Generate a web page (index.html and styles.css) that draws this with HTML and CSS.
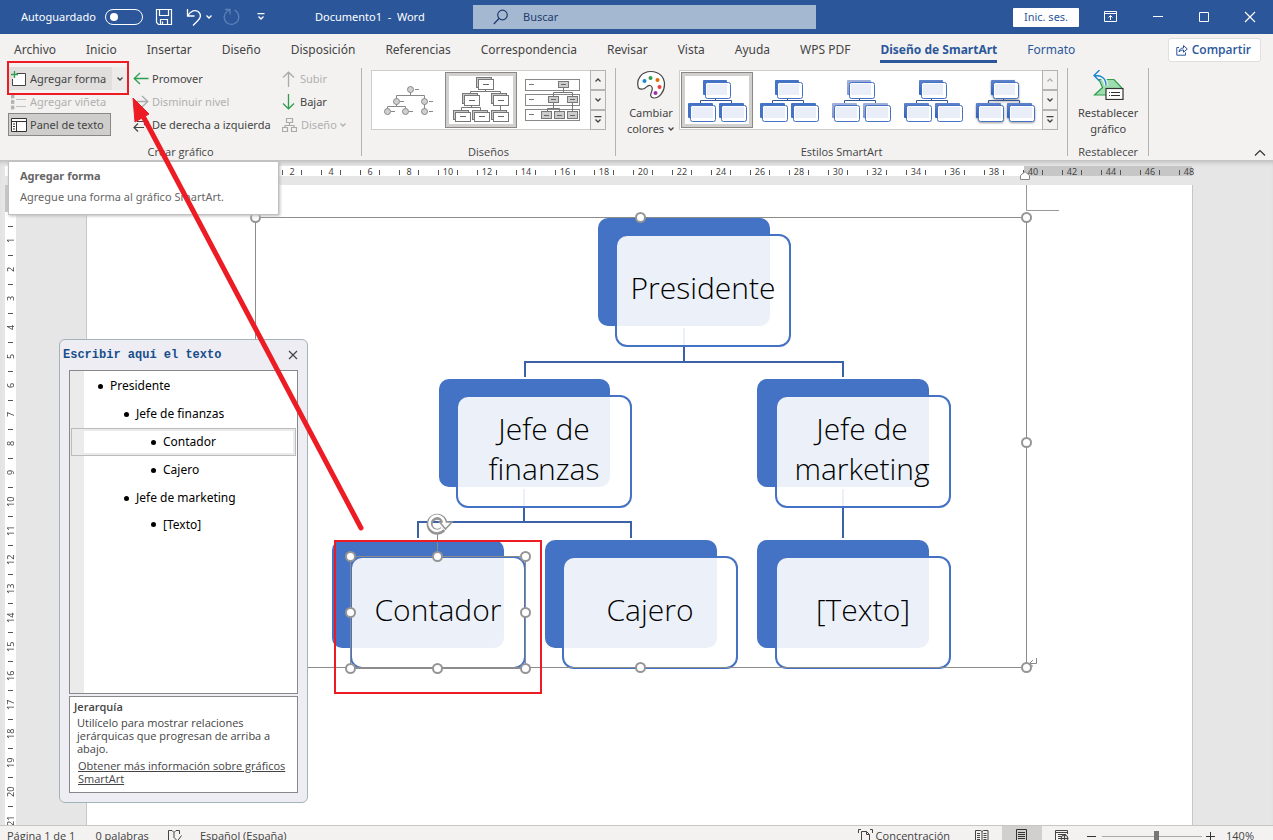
FILE: index.html
```html
<!DOCTYPE html>
<html lang="es">
<head>
<meta charset="utf-8">
<title>Documento1 - Word</title>
<link rel="stylesheet" href="styles.css">
</head>
<body>
<svg class="defs" aria-hidden="true">
  <defs>
    <linearGradient id="fade" x1="0" y1="0" x2="0" y2="1"><stop offset="0" stop-color="#9fb0da"/><stop offset="1" stop-color="#8296cc"/></linearGradient>
    <linearGradient id="deep" x1="0" y1="0" x2="0" y2="1"><stop offset="0" stop-color="#6083cb"/><stop offset="1" stop-color="#2e61ba"/></linearGradient>
    <symbol id="chev" viewBox="0 0 8 8"><path d="M1.500 2.500 4 5l2.500-2.500" fill="none" stroke="currentColor" stroke-width="1.300"/></symbol>
    <symbol id="chev-up" viewBox="0 0 8 8"><path d="M1.500 5.500 4 3l2.500 2.500" fill="none" stroke="currentColor" stroke-width="1.300"/></symbol>
    <symbol id="chev-more" viewBox="0 0 8 8"><path d="M0.500 0.500h7M1.500 3.500 4 6l2.500-2.500" fill="none" stroke="currentColor" stroke-width="1.300"/></symbol>
    <symbol id="style-thumb" viewBox="0 0 72 56">
      <g class="backs"><rect x="22" y="8" width="24" height="15" rx="1"/><rect x="7" y="31" width="25" height="15" rx="1"/><rect x="38" y="31" width="25" height="15" rx="1"/></g>
      <path d="M34.500 26v3M19.500 31v-2.500h31v2.500" fill="none" stroke="#2f5597"/>
      <g class="fronts"><rect x="24.500" y="10.500" width="25" height="16" rx="2"/><rect x="9.500" y="33.500" width="25" height="16" rx="2"/><rect x="40.500" y="33.500" width="25" height="16" rx="2"/></g>
      <g fill="#e9eef8"><rect x="26" y="12" width="20" height="11"/><rect x="11" y="35" width="21" height="11"/><rect x="42" y="35" width="21" height="11"/></g>
    </symbol>
  </defs>
</svg>

<header class="titlebar">
  <div class="title-left">
    <label class="autosave">Autoguardado <input type="checkbox" class="toggle"></label>
    <button class="tbtn save" aria-label="Guardar"><svg width="18" height="18" viewBox="0 0 18 18"><path d="M1.500 1.500h15v15h-13l-2-2zM4.500 1.500v6h9v-6M5.500 16.500v-5h7v5M7.500 16v-2.500" fill="none" stroke="#fff" stroke-width="1.200"/></svg></button>
    <button class="tbtn undo" aria-label="Deshacer"><svg width="18" height="18" viewBox="0 0 18 18"><path d="M2.500 1v7h7M2.500 8C6 2.500 10 1.500 13 3.500c4 3 2.500 7-.5 9.500L8 17.500" fill="none" stroke="#fff" stroke-width="1.300"/></svg><svg width="8" height="8"><use href="#chev"/></svg></button>
    <button class="tbtn redo" aria-label="Rehacer" disabled><svg width="18" height="18" viewBox="0 0 18 18"><path d="M2 1.500h5v5M6.500 2C0 5 0 12 4 15c4 2.500 9 1.500 11-2.500 1.500-4 .5-8-3.500-10.500" fill="none" stroke="#5e80b8" stroke-width="1.300"/></svg></button>
    <button class="tbtn custom" aria-label="Personalizar"><svg width="8" height="8"><use href="#chev-more"/></svg></button>
    <span class="doc-title">Documento1&nbsp; -&nbsp; Word</span>
  </div>
  <label class="search">
    <svg width="16" height="16" viewBox="0 0 16 16"><circle cx="9.500" cy="6" r="4.800" fill="none" stroke="#1f3c6d" stroke-width="1.200"/><path d="M6 9.500.8 15" stroke="#1f3c6d" stroke-width="1.300"/></svg>
    <input type="text" placeholder="Buscar" aria-label="Buscar">
  </label>
  <div class="title-right">
    <button class="signin">Inic. ses.</button>
    <button class="wbtn" aria-label="Opciones de cinta"><svg width="14" height="12" viewBox="0 0 14 12"><path d="M.5.5h12v10H.5zM.5 2.500h12M6.500 9V4.500M4.500 6.500l2-2 2 2" fill="none" stroke="#fff"/></svg></button>
    <button class="wbtn" aria-label="Minimizar"><svg width="12" height="12"><path d="M1 5.500h10" stroke="#fff"/></svg></button>
    <button class="wbtn" aria-label="Maximizar"><svg width="12" height="12"><path d="M1.500 1.500h9v9h-9z" fill="none" stroke="#fff"/></svg></button>
    <button class="wbtn" aria-label="Cerrar"><svg width="12" height="12"><path d="M1 1l10 10M11 1 1 11" stroke="#fff" stroke-width="1.200"/></svg></button>
  </div>
</header>

<nav class="tabs">
  <button>Archivo</button><button>Inicio</button><button>Insertar</button><button>Diseño</button><button>Disposición</button><button>Referencias</button><button>Correspondencia</button><button>Revisar</button><button>Vista</button><button>Ayuda</button><button>WPS PDF</button><button class="active">Diseño de SmartArt</button><button class="context">Formato</button>
  <button class="share"><svg width="12" height="12" viewBox="0 0 12 12"><path d="M3 3.500H.8v7.700h8.700V8.500M3 8c.5-3 2-4 4.500-4V1.500L11.300 5 7.500 8.200V6C5.500 6 4.200 6.500 3 8z" fill="none" stroke="#2b579a"/></svg>Compartir</button>
</nav>

<section class="ribbon">
  <div class="group create">
    <div class="cols">
      <div class="col c1">
        <div class="split"><button class="cmd"><svg width="16" height="16" viewBox="0 0 16 16"><path d="M5.500 2.500h9v12h-13V8" fill="#fff" stroke="#444"/><path d="M3.500 0v7M0 3.500h7" stroke="#2f9e4f" stroke-width="1.300"/></svg>Agregar forma</button><button class="drop" aria-label="Más formas"><svg width="8" height="8"><use href="#chev"/></svg></button></div>
        <button class="cmd" disabled><svg width="16" height="16" viewBox="0 0 16 16"><path d="M0 1h3v3H0zM0 6.500h3v3H0zM0 12h3v3H0zM5 5.500h10M5 12.500h10" fill="#b5b3b1" stroke="#b5b3b1" stroke-width=".8"/></svg>Agregar viñeta</button>
        <button class="cmd pressed"><svg width="16" height="14" viewBox="0 0 16 14"><path d="M.5.500h15v13H.5z" fill="#fff" stroke="#333"/><path d="M.5 3.500h15M5.500 3.500v10M2 6h2M2 8.500h2M2 11h2" fill="none" stroke="#333"/></svg>Panel de texto</button>
      </div>
      <div class="col c2">
        <button class="cmd"><svg width="16" height="14" viewBox="0 0 16 14"><path d="M1 6.500h14.500M7 1 1.200 6.500 7 12" fill="none" stroke="#2f9e4f" stroke-width="1.300"/></svg>Promover</button>
        <button class="cmd" disabled><svg width="16" height="14" viewBox="0 0 16 14"><path d="M.5 6.500H15M9 1l5.800 5.500L9 12" fill="none" stroke="#aaa" stroke-width="1.300"/></svg>Disminuir nivel</button>
        <button class="cmd"><svg width="16" height="14" viewBox="0 0 16 14"><path d="M1 9.500h10M5 5.500 1 9.500l4 4M4 3.500h11M11 0l4 3.500L11 7" fill="none" stroke="#444" stroke-width="1.200"/></svg>De derecha a izquierda</button>
      </div>
      <div class="col c3">
        <button class="cmd" disabled><svg width="14" height="16" viewBox="0 0 14 16"><path d="M6.500 16V1.200M1 6.500l5.500-5.300L12 6.500" fill="none" stroke="#aaa" stroke-width="1.300"/></svg>Subir</button>
        <button class="cmd"><svg width="14" height="16" viewBox="0 0 14 16"><path d="M6.500 0v14.800M1 9.500l5.500 5.300L12 9.500" fill="none" stroke="#2f9e4f" stroke-width="1.300"/></svg>Bajar</button>
        <button class="cmd" disabled><svg width="15" height="16" viewBox="0 0 15 16"><path d="M4.500 1.500h6v4h-6zM.5 10.500h5v4h-5zM9.500 10.500h5v4h-5zM7.500 5.500v3M3 10.500v-2h9v2" fill="none" stroke="#aaa" stroke-width="1.200"/></svg>Diseño <svg class="mini" width="8" height="8"><use href="#chev"/></svg></button>
      </div>
    </div>
    <h2>Crear gráfico</h2>
  </div>

  <div class="group">
    <div class="gallery">
      <button class="thumb" aria-label="Jerarquía con círculos"><svg width="72" height="56" viewBox="0 0 72 56"><path d="M37.500 20v4M23.500 27v-3.500h28V38M23.500 31v4M14.500 38v-3.500h18V38M42 17.500h4M27 29.500h4M56 29.500h4M18 39.500h4M36 39.500h4M56 39.500h4" fill="none" stroke="#888"/><g fill="#d0d0d0" stroke="#888"><circle cx="37.500" cy="17.500" r="3"/><circle cx="23.500" cy="29.500" r="3"/><circle cx="51.500" cy="29.500" r="3"/><circle cx="14.500" cy="39.500" r="3"/><circle cx="32.500" cy="39.500" r="3"/><circle cx="51.500" cy="39.500" r="3"/></g></svg></button>
      <button class="thumb selected" aria-label="Jerarquía"><svg width="72" height="56" viewBox="0 0 72 56"><g fill="#c8c8c8" stroke="#777"><rect x="31.500" y="5.500" width="15" height="10"/><rect x="17.500" y="21.500" width="15" height="10"/><rect x="46.500" y="21.500" width="15" height="10"/><rect x="8.500" y="38.500" width="15" height="9"/><rect x="27.500" y="38.500" width="15" height="9"/><rect x="46.500" y="38.500" width="15" height="9"/></g><path d="M40.500 17v3M25.500 22v-2.500h30V22M26.500 34v2M16.500 38v-2.500h19V38M55.500 34v4" fill="none" stroke="#777"/><g fill="#fff" stroke="#777"><rect x="33.500" y="7.500" width="15" height="10"/><rect x="19.500" y="23.500" width="15" height="10"/><rect x="48.500" y="23.500" width="15" height="10"/><rect x="10.500" y="40.500" width="15" height="9"/><rect x="29.500" y="40.500" width="15" height="9"/><rect x="48.500" y="40.500" width="15" height="9"/></g><path d="M38 12.500h6M24 28.500h6M53 28.500h6M15 44.500h6M34 44.500h6M53 44.500h6" stroke="#666"/></svg></button>
      <button class="thumb" aria-label="Jerarquía etiquetada"><svg width="72" height="56" viewBox="0 0 72 56"><g fill="#fff" stroke="#888"><rect x="8.500" y="7.500" width="54" height="11"/><rect x="8.500" y="22.500" width="54" height="11"/><rect x="8.500" y="37.500" width="54" height="11"/></g><path d="M12 12.500h5M12 27.500h5M12 42.500h5M46.500 16v5M36.500 24v-3.500h19V40M36.500 31v6M30.500 40v-3.500h12V40" fill="none" stroke="#777"/><g fill="#ccc" stroke="#777"><rect x="41.500" y="9.500" width="10" height="6"/><rect x="31.500" y="24.500" width="10" height="6"/><rect x="50.500" y="24.500" width="10" height="6"/><rect x="24.500" y="39.500" width="10" height="7"/><rect x="37.500" y="39.500" width="10" height="7"/><rect x="50.500" y="39.500" width="10" height="7"/></g><path d="M44 12.500h5M34 27.500h5M53 27.500h5M27 43.500h5M40 43.500h5M53 43.500h5" stroke="#666"/></svg></button>
      <div class="scroll"><button aria-label="Anterior"><svg width="8" height="8"><use href="#chev-up"/></svg></button><button aria-label="Siguiente"><svg width="8" height="8"><use href="#chev"/></svg></button><button aria-label="Más"><svg width="8" height="8"><use href="#chev-more"/></svg></button></div>
    </div>
    <h2>Diseños</h2>
  </div>

  <div class="group">
    <div class="cols">
      <button class="big colors"><svg width="30" height="30" viewBox="0 0 30 30"><path d="M2.500 18C-.5 9 6 1.500 15 1.500c8 0 13.500 5.500 13.500 13 0 7-5 13.500-10.500 13.500-3.500 0-4-3-2.500-6 1-2.500 1.500-6-1.500-6.500-3-.5-4 3-7 3.500-2 .3-3.500 0-4.500-1z" fill="#fff" stroke="#444" stroke-width="1.200"/><circle cx="8.500" cy="11" r="2" fill="#1a86d0"/><circle cx="14.500" cy="8" r="2" fill="#2f9e4f"/><circle cx="21.500" cy="10" r="2" fill="#e06c00"/><circle cx="23.500" cy="17" r="2" fill="#ee3b3b"/><circle cx="19.500" cy="23" r="2" fill="#9b2fae"/></svg><span>Cambiar</span><span>colores <svg class="mini" width="8" height="8"><use href="#chev"/></svg></span></button>
      <div class="gallery">
        <button class="thumb selected" aria-label="Relleno blanco"><svg class="t-flat" width="72" height="56"><use href="#style-thumb"/></svg></button>
        <button class="thumb" aria-label="Contorno"><svg class="t-flat" width="72" height="56"><use href="#style-thumb"/></svg></button>
        <button class="thumb" aria-label="Efecto sutil"><svg class="t-fade" width="72" height="56"><use href="#style-thumb"/></svg></button>
        <button class="thumb" aria-label="Efecto moderado"><svg class="t-deep" width="72" height="56"><use href="#style-thumb"/></svg></button>
        <button class="thumb" aria-label="Efecto intenso"><svg class="t-deep t-shadow" width="72" height="56"><use href="#style-thumb"/></svg></button>
        <div class="scroll"><button aria-label="Anterior" disabled><svg width="8" height="8"><use href="#chev-up"/></svg></button><button aria-label="Siguiente"><svg width="8" height="8"><use href="#chev"/></svg></button><button aria-label="Más"><svg width="8" height="8"><use href="#chev-more"/></svg></button></div>
      </div>
    </div>
    <h2>Estilos SmartArt</h2>
  </div>

  <div class="group">
    <button class="big reset"><svg width="32" height="30" viewBox="0 0 32 30"><path d="M7 9.500h15l7.500 8v7.500H2.500l8-7.500z" fill="#9fdcae" stroke="#2f9e4f" stroke-width="1.200"/><path d="M2 5.500c8 0 12 3 12 10" fill="none" stroke="#f2f1f0" stroke-width="4"/><path d="M7.500 0 2 5.500 7.500 11M2 5.500c8-.5 12 3 12 10" fill="none" stroke="#1a86d0" stroke-width="1.400"/><rect x="14" y="18.500" width="17" height="11" fill="#fff" stroke="#333" stroke-width="1.200"/><path d="M17 22.500h1M19 22.500h9M17 25.500h1M19 25.500h9" stroke="#333"/></svg><span>Restablecer</span><span>gráfico</span></button>
    <h2>Restablecer</h2>
  </div>
  <button class="collapse" aria-label="Contraer la cinta"><svg width="12" height="8"><path d="M1 6.500 6 1.500l5 5" fill="none" stroke="#333" stroke-width="1.200"/></svg></button>
</section>

<main class="workspace">
  <ol class="hruler"><li>2</li><li>4</li><li>6</li><li>8</li><li>10</li><li>12</li><li>14</li><li>16</li><li>18</li><li>20</li><li>22</li><li>24</li><li>26</li><li>28</li><li>30</li><li>32</li><li>34</li><li>36</li><li>38</li><li>40</li><li>42</li><li>44</li><li>46</li><li>48</li></ol>
  <svg class="indent" width="10" height="9" viewBox="0 0 10 9"><path d="M.5 8.500v-4L5 .7l4.500 3.800v4z" fill="#fff" stroke="#888"/></svg>
  <div class="body">
    <ol class="vruler"><li>1</li><li>2</li><li>3</li><li>4</li><li>5</li><li>6</li><li>7</li><li>8</li><li>9</li><li>10</li><li>11</li><li>12</li><li>13</li><li>14</li><li>15</li><li>16</li><li>17</li><li>18</li><li>19</li><li>20</li><li>21</li></ol>
    <article class="page">
      <svg class="diagram" width="830" height="515" viewBox="240 185 830 515">
        <path d="M1026.500 185v25.500h32.500" fill="none" stroke="#999"/>
        <g fill="none" stroke="#3b62a8" stroke-width="2">
          <path d="M684 328v34M525 377v-15h318v15M524 489v33M418 538v-16h213v16M843 489v49"/>
        </g>
        <g fill="#4472c4">
          <rect x="598" y="218" width="172" height="108" rx="10"/><rect x="439" y="379" width="171" height="108" rx="10"/><rect x="757" y="379" width="172" height="108" rx="10"/><rect x="332" y="540" width="172" height="108" rx="10"/><rect x="545" y="540" width="172" height="108" rx="10"/><rect x="757" y="540" width="172" height="108" rx="10"/>
        </g>
        <g fill="#fff" fill-opacity=".9" stroke="#4472c4" stroke-width="2">
          <rect x="616" y="235" width="174" height="111" rx="11"/><rect x="457" y="396" width="174" height="111" rx="11"/><rect x="776" y="396" width="174" height="111" rx="11"/><rect x="351" y="557" width="174" height="111" rx="11"/><rect x="563" y="557" width="174" height="111" rx="11"/><rect x="776" y="557" width="174" height="111" rx="11"/>
        </g>
        <g class="node-text" text-anchor="middle">
          <text x="703" y="299">Presidente</text>
          <text x="544" y="440">Jefe de</text><text x="544" y="480">finanzas</text>
          <text x="862" y="440">Jefe de</text><text x="862" y="480">marketing</text>
          <text x="438" y="621">Contador</text><text x="650" y="621">Cajero</text><text x="863" y="621">[Texto]</text>
        </g>
        <path d="M255.500 217.500h771v450h-771zM350.500 556.500h175v112h-175zM437.500 533v23" fill="none" stroke="#8c8c8c"/>
        <path d="M1036.500 658v5.500h-7M1033 660l-3.500 3.500 3.500 3" fill="none" stroke="#888"/>
        <g fill="#fff" stroke="#959595" stroke-width="2">
          <circle cx="255.500" cy="217.500" r="4.500"/><circle cx="640.500" cy="217.500" r="4.500"/><circle cx="1026.500" cy="217.500" r="4.500"/><circle cx="1026.500" cy="442.500" r="4.500"/><circle cx="1026.500" cy="667.500" r="4.500"/><circle cx="640.500" cy="667.500" r="4.500"/>
          <circle cx="350.500" cy="556.500" r="4.500"/><circle cx="437.500" cy="556.500" r="4.500"/><circle cx="525.500" cy="556.500" r="4.500"/><circle cx="350.500" cy="612.500" r="4.500"/><circle cx="525.500" cy="612.500" r="4.500"/><circle cx="350.500" cy="668.500" r="4.500"/><circle cx="437.500" cy="668.500" r="4.500"/><circle cx="525.500" cy="668.500" r="4.500"/>
        </g>
        <path d="M443 529a7.500 7.500 0 1 1 1.500-6" fill="none" stroke="#959595" stroke-width="6"/>
        <path d="M439.500 522h12.500l-6.500 7z" fill="#fff" stroke="#959595" stroke-width="1.500"/>
        <path d="M442.500 528.500a7.500 7.500 0 1 1 2-5.500" fill="none" stroke="#fff" stroke-width="2.500"/>
      </svg>
    </article>
  </div>

  <aside class="textpane">
    <header><h3>Escribir aquí el texto</h3><button aria-label="Cerrar panel"><svg width="10" height="10"><path d="M1 1l8 8M9 1 1 9" stroke="#444" stroke-width="1.200"/></svg></button></header>
    <ul class="outline">
      <li class="l1">Presidente</li><li class="l2">Jefe de finanzas</li><li class="l3 current">Contador</li><li class="l3">Cajero</li><li class="l2">Jefe de marketing</li><li class="l3 last">[Texto]</li>
    </ul>
    <div class="info"><h4>Jerarquía</h4><p>Utilícelo para mostrar relaciones jerárquicas que progresan de arriba a abajo.</p><a href="#">Obtener más información sobre gráficos SmartArt</a></div>
  </aside>
  <div class="tooltip" role="tooltip"><strong>Agregar forma</strong><span>Agregue una forma al gráfico SmartArt.</span></div>
</main>

<footer class="status">
  <span class="s-page">Página 1 de 1</span><span class="s-words">0 palabras</span>
  <svg class="s-proof" width="15" height="14" viewBox="0 0 15 14"><path d="M6 11.500H1.500v-10H5l2 2 2-2h3.500V5M7 3.500V9M7.500 9l3 3 4-5.500" fill="none" stroke="#444"/></svg>
  <span>Español (España)</span>
  <button class="focus"><svg width="15" height="14" viewBox="0 0 15 14"><path d="M.5 4V.5H3M14.500 4V.5H12M3.500 14V2.500h5l3 3V14M8.500 2.500v3h3" fill="none" stroke="#444"/></svg>Concentración</button>
  <button class="view" aria-label="Modo lectura"><svg width="14" height="14" viewBox="0 0 14 14"><path d="M.5 1.500h5l1.500 1 1.500-1h4.500v11H.5zM7 2.500V13M2 4.500h3M2 6.500h3M2 8.500h3M2 10.500h3M8.500 4.500h3M8.500 6.500h3M8.500 8.500h3M8.500 10.500h3" fill="none" stroke="#444"/></svg></button>
  <button class="view on" aria-label="Diseño de impresión"><svg width="14" height="14" viewBox="0 0 14 14"><path d="M1.500.5h10v13h-10zM3 3.500h7M3 5.500h7M3 7.500h7M3 9.500h7M3 11.500h7" fill="none" stroke="#333"/></svg></button>
  <button class="view" aria-label="Diseño web"><svg width="14" height="14" viewBox="0 0 14 14"><path d="M6 12.500H.5V1.500h12V5M.5 3.500h12M3 5.500h8M3 7.500h4M3 9.500h3" fill="none" stroke="#444"/><circle cx="9.500" cy="9.500" r="3.500" fill="#ddd" stroke="#444"/><path d="M6 9.500h7M9.500 6v7" stroke="#444"/></svg></button>
  <button class="zoombtn" aria-label="Alejar"><svg width="10" height="10"><path d="M0 5.500h9" stroke="#333"/></svg></button>
  <input class="zoom" type="range" min="0" max="200" value="110" aria-label="Zoom">
  <button class="zoombtn" aria-label="Acercar"><svg width="10" height="10"><path d="M0 5.500h9M4.500 1v9" stroke="#333"/></svg></button>
  <span class="pct">140%</span>
</footer>

<svg class="annotation" width="560" height="710" viewBox="0 0 560 710" aria-hidden="true">
  <g fill="none" stroke="#ed1c24" stroke-width="2"><rect x="8" y="62" width="120" height="32"/><rect x="335" y="541" width="206" height="152"/></g>
  <path d="M361 528 144 118" stroke="#ed1c24" stroke-width="5" stroke-linecap="round"/>
  <path d="M133 98l2 24 14-8z" fill="#ed1c24" stroke="#ed1c24" stroke-width="1"/>
</svg>
</body>
</html>
```
FILE: styles.css
```css
* { box-sizing: border-box; }
body {
  margin: 0; height: 100vh; display: flex; flex-direction: column; overflow: hidden; position: relative;
  font: 11px/16px "Noto Sans", "Open Sans", sans-serif; color: #444; background: #e6e6e6;
}
button { font: inherit; color: inherit; border: 0; padding: 0; margin: 0; background: none; display: flex; align-items: center; white-space: nowrap; }
h2, h3, h4, p, ol, ul { margin: 0; padding: 0; font-weight: 400; font-size: inherit; list-style: none; }
svg { display: block; flex: none; }
.defs { position: absolute; width: 0; height: 0; }
.annotation { position: absolute; left: 0; top: 0; pointer-events: none; }

.titlebar { display: flex; align-items: center; flex: 0 0 34px; background: #2b579a; color: #fff; }
.title-left { flex: 1 1 473px; display: flex; align-items: center; padding-left: 21px; white-space: nowrap; }
.title-right { flex: 1 1 457px; display: flex; align-items: center; justify-content: flex-end; gap: 34px; padding-right: 17px; }
.autosave { display: flex; align-items: center; width: 122px; justify-content: space-between; }
.toggle { appearance: none; margin: 0; width: 38px; height: 16px; border: 1px solid #fff; border-radius: 8px; display: flex; align-items: center; padding-left: 4px; }
.toggle::before { content: ""; width: 8px; height: 8px; border-radius: 50%; background: #fff; }
.save { margin-left: 12px; }
.undo { margin-left: 12px; gap: 2px; }
.redo { margin-left: 10px; }
.custom { margin-left: 16px; }
.doc-title { margin-left: 50px; }
.search { flex: 0 1 343px; height: 24px; display: flex; align-items: center; gap: 14px; padding-left: 20px; background: #a4b8d2; }
.search input { flex: 1; min-width: 0; border: 0; padding: 0; background: none; font: inherit; }
.search input::placeholder { color: #1f3c6d; opacity: 1; }
.signin { height: 19px; width: 66px; justify-content: center; background: #fff; color: #2b579a; border-radius: 1px; margin-right: -9px; }

.tabs { display: flex; align-items: center; flex: 0 0 33px; gap: 30px; padding: 0 12px 2px 14px; background: #f3f2f1; font-size: 12px; white-space: nowrap; }
.tabs .active { color: #2b579a; font-weight: 700; height: 26px; border-top: 3px solid transparent; border-bottom: 3px solid #2b579a; }
.tabs .context { color: #2b579a; }
.tabs .share { margin-left: auto; height: 24px; padding: 0 9px 0 7px; gap: 4px; background: #fff; border: 1px solid #e1dfdd; border-radius: 3px; color: #2b579a; font-family: "Open Sans", "Noto Sans", sans-serif; font-weight: 600; }

.ribbon { display: flex; flex: 0 0 93px; background: #f3f2f1; padding: 1px 7px 3px 0; }
.group { display: flex; flex-direction: column; align-items: center; justify-content: space-between; border-right: 1px solid #b5b3b1; padding: 2px 9px 0; height: 88px; }
.group h2 { height: 8px; display: flex; align-items: center; font-family: "Open Sans", "Noto Sans", sans-serif; white-space: nowrap; }
.create { padding: 0; width: 362px; }
.cols { display: flex; }
.create .cols { align-self: stretch; margin-top: -1px; }
.col { display: flex; flex-direction: column; align-items: flex-start; }
.c1 { padding-left: 8px; width: 132px; }
.c2 { width: 149px; }
.cmd { height: 23px; gap: 3px; padding: 0 2px; }
.c1 .cmd { padding: 0 6px 0 3px; }
.c2 .cmd { padding: 0 0 0 1px; }
.c3 .cmd { padding: 0 0 0 1px; gap: 4px; }
.cmd:disabled { color: #b1afad; }
.cmd:disabled .mini { margin-left: -2px; }
.c1 .pressed { background: #cfcecc; border: 1px solid #8a8886; padding-left: 2px; }
.split { display: flex; background: #e1dfdd; width: 120px; }
.split .drop { background: #edebe9; flex: 1; justify-content: center; }
.gallery { display: flex; height: 60px; background: #fff; border: 1px solid #cfcecc; padding-left: 1px; }
.thumb { width: 72px; height: 56px; margin-top: 1px; }
.selected { border: 1px solid #8a8886; box-shadow: inset 0 0 0 3px #d2d0ce; }
.selected svg { margin: -1px; }
.scroll { width: 16px; display: flex; flex-direction: column; margin: -1px -1px -1px 1px; }
.scroll button { flex: 1; justify-content: center; border: 1px solid #b5b3b1; background: #f3f2f1; }
.scroll button:disabled { color: #b1afad; }
.big { flex-direction: column; line-height: 16px; }
.big svg { margin-bottom: 5px; }
.big span { display: flex; align-items: center; gap: 3px; }
.big .mini { margin: 0; }
.colors { margin-right: 2px; width: 52px; }
.reset { margin: 0 1px; }
.backs { fill: var(--back); }
.fronts { fill: #fff; stroke: #4472c4; }
.t-flat { --back: #4472c4; }
.t-fade { --back: url(#fade); }
.t-deep { --back: url(#deep); }
.t-shadow { filter: drop-shadow(0 1px 1px #999); }
.collapse { margin: auto 0 0 auto; }

.workspace { flex: 1; min-height: 0; position: relative; overflow: hidden; padding-top: 6px; display: flex; flex-direction: column; box-shadow: inset 0 5px 5px -3px #b8b8b8; }
.hruler { display: flex; flex: none; height: 10px; margin: 0 81px 0 5px; padding-left: 268px; font-size: 9px; line-height: 10px; background: linear-gradient(to left, #c6c6c6 168px, #fff 168px); }
.hruler li { flex: 0 0 39px; height: 12px; display: flex; align-items: center; justify-content: center; text-align: center; }
.hruler li::before, .hruler li::after { content: ""; width: 1px; height: 5px; background: #555; }
.hruler li::before { margin-right: auto; margin-left: 9px; }
.hruler li::after { margin-left: auto; margin-right: 10px; }
.hruler li:last-child::after { visibility: hidden; }
.indent { position: absolute; right: 243px; top: 11px; }
.body { flex: 1; min-height: 0; display: flex; margin-top: 9px; }
.vruler { width: 11px; margin-left: 5px; background: linear-gradient(#c6c6c6 27px, #fff 27px); padding-top: 41px; font-size: 9px; }
.vruler li { height: 29px; width: 11px; writing-mode: vertical-rl; transform: rotate(180deg); display: flex; align-items: center; justify-content: center; line-height: 11px; position: relative; }
.vruler li::after { content: ""; position: absolute; bottom: 0; left: 3px; width: 5px; height: 1px; background: #555; }
.page { flex: 1; margin: 0 80px 0 70px; background: #fff; border: 1px solid #c6c6c6; border-width: 0 1px; position: relative; }
.diagram { position: absolute; left: 153px; top: 0; }
.node-text { font: 300 30px "Open Sans", "Noto Sans", sans-serif; fill: #000; }

.textpane { position: absolute; left: 59px; top: 179px; width: 249px; height: 464px; display: flex; flex-direction: column; padding: 0 9px 9px; background: #eeedf4; border: 1px solid #a3b4b8; border-radius: 6px; }
.textpane header { display: flex; align-items: center; justify-content: space-between; height: 30px; flex: none; margin: 0 0 0 -6px; }
.textpane h3 { font: 700 12px/16px "Liberation Mono", monospace; color: #174e8a; }
.outline { flex: 1; border: 1px solid #888; background: linear-gradient(to right, #ebebeb 14px, #fff 14px); padding: 1px; color: #000; font-size: 12px; }
.outline li { height: 28px; display: flex; align-items: center; gap: 7px; border: 1px solid transparent; line-height: 16px; }
.outline li::before { content: ""; width: 5px; height: 5px; border-radius: 50%; background: #000; }
.outline .l1 { padding-left: 26px; }
.outline .l2 { padding-left: 52px; }
.outline .l3 { padding-left: 79px; }
.outline .last { height: 25px; }
.outline .current { border-color: #bbb; box-shadow: inset 0 0 0 2px #ebebeb; }
.info { margin-top: 2px; height: 97px; flex: none; border: 1px solid #888; background: #fff; padding: 3px 4px 0; font-family: "Open Sans", "Noto Sans", sans-serif; line-height: 13px; }
.info h4 { font-weight: 600; }
.info p { padding: 3px 3px 4px; }
.info a { color: #444; display: block; padding-left: 4px; }
.tooltip { position: absolute; left: 8px; top: 1px; width: 271px; height: 54px; background: #fff; border: 1px solid #c0c0c0; box-shadow: 1px 1px 3px #bbb; display: flex; flex-direction: column; gap: 5px; padding: 6px 11px; color: #666; }

.status { flex: 0 0 15px; overflow: hidden; display: flex; align-items: flex-start; padding: 0 19px 0 7px; background: #f3f2f1; border-top: 1px solid #c6c6c6; font-family: "Open Sans", "Noto Sans", sans-serif; line-height: 20px; }
.status svg { margin-top: 3px; }
.status > * { white-space: nowrap; flex: none; }
.s-words { margin-left: 20px; }
.s-proof { margin: 0 18px; }
.status button { align-items: flex-start; }
.status .focus { margin-left: auto; gap: 3px; margin-right: 12px; }
.view { width: 40px; height: 22px; justify-content: center; }
.on { background: #d2d0ce; }
.zoombtn { width: 10px; }
.status .zoombtn svg { margin-top: 5px; }
.zoom { appearance: none; width: 100px; height: 20px; margin: 0 4px 0 5px; background: linear-gradient(#aaa, #aaa) center/100% 1px no-repeat; }
.zoom::-webkit-slider-thumb { appearance: none; width: 5px; height: 11px; background: #777; }
.view + .zoombtn { margin-left: 5px; }
.pct { margin-left: 10px; }
```
